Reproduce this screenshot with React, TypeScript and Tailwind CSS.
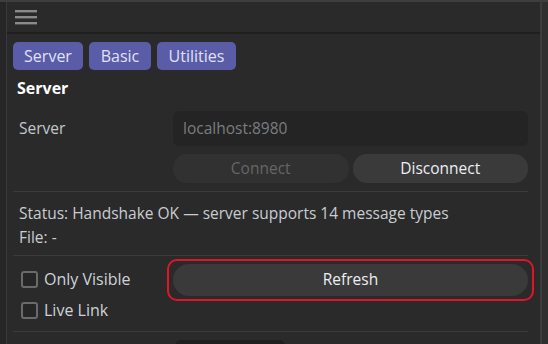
import React from 'react'

function Checkbox({ label }: { label: string }) {
    return (
        <label className="flex items-center gap-[6px] h-[24px]">
            <span className="w-[17px] h-[17px] rounded-[3px] border-2 border-[#6a6a6a] bg-[#262626]" />
            <span className="text-[16px] text-[#cfd3d8]">{label}</span>
        </label>
    )
}

export default function App() {
    return (
        <div className="w-[548px] h-[344px] bg-[#2a2a2a] overflow-hidden flex border-t-2 border-[#3e3e3e]" style={{ fontFamily: '"Open Sans", "Noto Sans", sans-serif' }}>
            {/* left edge */}
            <div className="w-[7px] shrink-0 bg-[#262626] border-r border-[#3a3a3a]" />

            {/* panel */}
            <div className="flex-1 min-w-0 flex flex-col">
                <div className="h-[32px] shrink-0 border-b-2 border-[#1f1f1f] flex items-center pl-[8px]">
                    <svg width="22" height="16" viewBox="0 0 22 16">
                        <rect x="0" y="1" width="22" height="2.4" fill="#8a8a8a" />
                        <rect x="0" y="7" width="22" height="2.4" fill="#8a8a8a" />
                        <rect x="0" y="13" width="22" height="2.4" fill="#8a8a8a" />
                    </svg>
                </div>

                <div className="pl-[6px] pr-[12px] flex flex-col shrink-0">
                    <div className="flex gap-[6px] mt-[8px]">
                        <button className="h-[28px] w-[70px] rounded-[5px] bg-[#5a5ca8] text-[#e0e2f4] text-[16px] leading-none">Server</button>
                        <button className="h-[28px] w-[62px] rounded-[5px] bg-[#5a5ca8] text-[#e0e2f4] text-[16px] leading-none">Basic</button>
                        <button className="h-[28px] w-[79px] rounded-[5px] bg-[#5a5ca8] text-[#e0e2f4] text-[16px] leading-none">Utilities</button>
                    </div>

                    <div className="mt-[7px] h-[22px] pl-[4px] text-[16px] font-bold text-white leading-[22px]">Server</div>

                    <div className="flex items-center mt-[12px]">
                        <div className="w-[160px] pl-[6px] text-[15.5px] text-[#c4c8cc]">Server</div>
                        <div className="flex-1 h-[35px] rounded-[6px] bg-[#242424] flex items-center pl-[10px] text-[15.5px] text-[#7a7d80]">localhost:8980</div>
                    </div>

                    <div className="flex mt-[8px]">
                        <div className="w-[160px]" />
                        <div className="flex-1 flex gap-[4px]">
                            <button className="flex-1 h-[29px] rounded-[14px] bg-[#313131] text-[15.5px] text-[#646668]">Connect</button>
                            <button className="flex-1 h-[29px] rounded-[14px] bg-[#3a3a3a] text-[15.5px] text-[#eceef2]">Disconnect</button>
                        </div>
                    </div>

                    <div className="mt-[8px] h-px bg-[#3a3a3a]" />

                    <div className="mt-[9px] pl-[6px] text-[15.5px] text-[#c9cdd2] leading-[24px]">
                        <div>Status: Handshake OK — server supports 14 message types</div>
                        <div>File: -</div>
                    </div>

                    <div className="mt-[6px] h-px bg-[#3a3a3a]" />

                    <div className="flex mt-[8px]">
                        <div className="w-[160px] pl-[8px] flex flex-col gap-[7px] pt-[3px]">
                            <Checkbox label="Only Visible" />
                            <Checkbox label="Live Link" />
                        </div>
                        <div className="flex-1">
                            <button className="relative w-full h-[32px] rounded-[16px] bg-[#3a3a3a] text-[15.5px] text-[#eceef2]">
                                Refresh
                                <span className="absolute -inset-x-[6px] -inset-y-[5px] rounded-[10px] border-2 border-[#e0142c]" />
                            </button>
                        </div>
                    </div>

                    <div className="mt-[9px] h-px bg-[#3a3a3a]" />

                    <div className="flex mt-[8px]">
                        <div className="w-[162px]" />
                        <div className="w-[110px] h-[20px] rounded-[6px] bg-[#1f1f1f]" />
                    </div>
                </div>
            </div>

            {/* right edge */}
            <div className="w-[8px] shrink-0 bg-[#2f2f2f] border-l-2 border-[#3c3c3c]" />
        </div>
    )
}
